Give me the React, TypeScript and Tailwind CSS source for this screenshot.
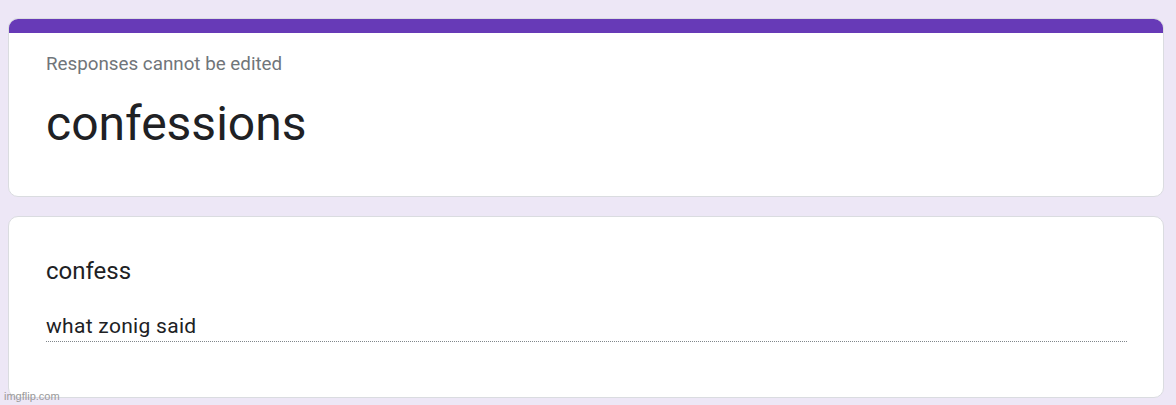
export default function App() {
    return (
        <div className="relative min-h-[405px] bg-[#ede7f6] pt-[18px] pl-[8px] pr-[12px] font-['Roboto',sans-serif]">
            <div className="rounded-[10px] overflow-hidden bg-white border border-[#dadce0] h-[179px]">
                <div className="h-[15px] bg-[#673ab7] -mx-px -mt-px"></div>
                <div className="pl-[37px] pt-[18px]">
                    <div className="text-[18.8px] leading-[26px] text-[#70757a]">Responses cannot be edited</div>
                    <div className="mt-[19px] text-[48px] leading-[56px] text-[#202124]">confessions</div>
                </div>
            </div>
            <div className="mt-[19px] rounded-[10px] bg-white border border-[#dadce0] h-[182px] pl-[37px] pr-[36px] pt-[38px]">
                <div className="text-[24px] leading-[32px] text-[#202124]">confess</div>
                <div className="mt-[25px] text-[21px] leading-[28px] tracking-[0.3px] text-[#202124] border-b border-dotted border-[#80868b] pb-[1px]">what zonig said</div>
            </div>
            <div className="absolute left-[4px] bottom-[3px] text-[11px] leading-[12px] text-[#9a9a9a] font-['Liberation_Sans',sans-serif]">imgflip.com</div>
        </div>
    )
}
